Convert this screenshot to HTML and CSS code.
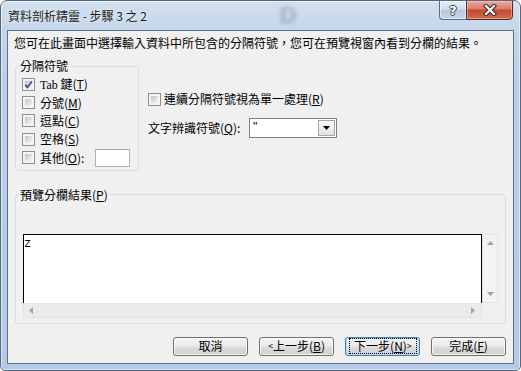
FILE: index.html
```html
<!DOCTYPE html>
<html lang="zh-Hant">
<head>
<meta charset="utf-8">
<title>資料剖析精靈</title>
<link rel="stylesheet" href="styles.css">
</head>
<body>
<div class="window">
  <div class="titlebar">
    <span class="title">資料剖析精靈 - 步驟 3 之 2</span>
    <span class="ghost">D</span>
    <div class="caption">
      <span class="cap-help">?</span>
      <span class="cap-close">
        <svg width="14" height="12" viewBox="0 0 14 12"><path d="M3 2 L11 10 M11 2 L3 10" stroke="#3a2320" stroke-width="4.2" stroke-linecap="square" fill="none"/><path d="M3 2 L11 10 M11 2 L3 10" stroke="#ffffff" stroke-width="2.2" stroke-linecap="square" fill="none"/></svg>
      </span>
    </div>
  </div>
  <div class="client">
    <p class="intro">您可在此畫面中選擇輸入資料中所包含的分隔符號，您可在預覽視窗內看到分欄的結果。</p>
    <div class="options">
      <fieldset class="group delims">
        <legend>分隔符號</legend>
        <div class="row"><span class="cb"><svg class="check" width="11" height="11" viewBox="0 0 11 11"><path d="M2.2 5.6 L4.4 8.4 L9 2.2" stroke="#4b5f8e" stroke-width="1.9" fill="none"/></svg></span><span class="lbl"><span class="latin">Tab</span> 鍵(<u>T</u>)</span></div>
        <div class="row"><span class="cb"></span><span class="lbl">分號(<u>M</u>)</span></div>
        <div class="row"><span class="cb"></span><span class="lbl">逗點(<u>C</u>)</span></div>
        <div class="row"><span class="cb"></span><span class="lbl">空格(<u>S</u>)</span></div>
        <div class="row"><span class="cb"></span><span class="lbl">其他(<u>O</u>):</span><span class="textbox"></span></div>
      </fieldset>
      <div class="side">
        <div class="row"><span class="cb"></span><span class="lbl tight">連續分隔符號視為單一處理(<u>R</u>)</span></div>
        <div class="qual">
          <span class="lbl-q">文字辨識符號(<u>Q</u>):</span>
          <div class="combo">
            <span class="combo-val">"</span>
            <span class="combo-btn"><svg width="7" height="4" viewBox="0 0 7 4"><path d="M0 0 H7 L3.5 4 Z" fill="#000"/></svg></span>
          </div>
        </div>
      </div>
    </div>
    <fieldset class="group preview">
      <legend>預覽分欄結果(<u>P</u>)</legend>
      <div class="pv">
        <div class="pv-data">z</div>
        <div class="vscroll">
          <svg width="7" height="4" viewBox="0 0 7 4"><path d="M0 4 H7 L3.5 0 Z" fill="#a3a3a3"/></svg>
          <svg width="7" height="4" viewBox="0 0 7 4"><path d="M0 0 H7 L3.5 4 Z" fill="#a3a3a3"/></svg>
        </div>
        <div class="hscroll">
          <svg width="4" height="7" viewBox="0 0 4 7"><path d="M4 0 V7 L0 3.5 Z" fill="#a3a3a3"/></svg>
          <svg width="4" height="7" viewBox="0 0 4 7"><path d="M0 0 V7 L4 3.5 Z" fill="#a3a3a3"/></svg>
        </div>
        <div class="corner"></div>
      </div>
    </fieldset>
    <div class="buttons">
      <button class="btn">取消</button>
      <button class="btn"><span class="lt">&lt;</span> 上一步(<u>B</u>)</button>
      <button class="btn default"><span class="focus">下一步(<u>N</u>) <span class="lt">&gt;</span></span></button>
      <button class="btn">完成(<u>F</u>)</button>
    </div>
  </div>
</div>
</body>
</html>
```

FILE: styles.css
```css
* { box-sizing: border-box; }
html, body { margin: 0; padding: 0; background: #ffffff; }
body {
  font-family: "Noto Sans CJK TC", "Noto Sans", sans-serif;
  font-size: 12px;
  color: #000;
}

.window {
  width: 521px;
  height: 371px;
  border: 1px solid #56687f;
  border-radius: 7px 7px 5px 5px;
  background: linear-gradient(to bottom, #d2e0f0 0px, #c4d6eb 29px, #bad0e9 80px, #b2cae7 100%);
  box-shadow: inset 0 0 0 1px rgba(255, 255, 255, 0.55);
  padding: 0 6px 6px 6px;
  display: flex;
  flex-direction: column;
  overflow: hidden;
}

.titlebar {
  height: 29px;
  display: flex;
  align-items: center;
}
.title {
  padding-left: 1px;
  line-height: 14px;
  color: #1b1b1b;
  white-space: nowrap;
  text-shadow: 0 0 5px rgba(255, 255, 255, 0.9);
}
.ghost {
  margin-left: 132px;
  font: bold 22px/22px "DejaVu Sans", sans-serif;
  color: rgba(70, 82, 100, 0.28);
  filter: blur(2px);
}
.caption {
  margin-left: auto;
  margin-right: 1px;
  margin-top: -1px;
  align-self: flex-start;
  height: 20px;
  display: flex;
}
.cap-help {
  width: 27px;
  border: 1px solid #5a6c83;
  border-right: none;
  border-radius: 0 0 0 4px;
  background: linear-gradient(to bottom, #e6edf6 0%, #d3deeb 45%, #b7c8dc 52%, #c8d7e8 100%);
  box-shadow: inset 0 0 0 1px rgba(255, 255, 255, 0.5);
  display: flex;
  align-items: center;
  justify-content: center;
  font: bold 13px/13px "DejaVu Sans", sans-serif;
  color: #ffffff;
  text-shadow: 1px 0 0 #3b4656, -1px 0 0 #3b4656, 0 1px 0 #3b4656, 0 -1px 0 #3b4656;
}
.cap-close {
  width: 47px;
  border: 1px solid #4f2b29;
  border-radius: 0 0 4px 0;
  background: linear-gradient(to bottom, #e9ab9c 0%, #db7d69 42%, #c44a31 52%, #d2694d 100%);
  box-shadow: inset 0 0 0 1px rgba(255, 220, 210, 0.45);
  display: flex;
  align-items: center;
  justify-content: center;
}

.client {
  flex: 1;
  border: 1px solid #5f7189;
  background: #f0f0f0;
  display: flex;
  flex-direction: column;
}

.intro {
  margin: 5px 0 0 6px;
  line-height: 14px;
  white-space: nowrap;
}

.options {
  display: flex;
  margin: 9px 0 0 7px;
}

.group {
  margin: 0;
  border: 1px solid #d5dfe5;
  border-radius: 3px;
  min-width: 0;
}
.group legend {
  padding: 0 1px;
  line-height: 14px;
}

.delims {
  width: 124px;
  padding: 2px 0 3px 6px;
}
.delims legend { margin-left: -3px; }

.row {
  display: flex;
  align-items: center;
  height: 18.4px;
}
.cb {
  flex: none;
  width: 13px;
  height: 13px;
  border: 1px solid #8e8f8f;
  padding: 2px;
  background: linear-gradient(135deg, #c0c5cb 0%, #f6f6f6 100%) content-box, #f4f4f4;
  display: flex;
}
.check {
  flex: none;
  margin: -2px;
}
.lbl {
  margin-left: 5px;
  line-height: 14px;
  white-space: nowrap;
}
.lbl.tight { margin-left: 3px; }
.latin { font-family: "Liberation Serif", serif; }
u { text-underline-offset: 1px; }

.textbox {
  width: 35px;
  height: 18px;
  margin-left: 11px;
  border: 1px solid #b4b4b4;
  border-top-color: #a6a6a6;
  background: #ffffff;
}

.side {
  margin-left: 9px;
  padding-top: 33px;
  display: flex;
  flex-direction: column;
}
.side .row { height: 14px; }

.qual {
  display: flex;
  align-items: center;
  margin-top: 12px;
}
.lbl-q {
  width: 101px;
  line-height: 14px;
  white-space: nowrap;
}
.combo {
  width: 88px;
  height: 20px;
  border: 1px solid #828282;
  background: #ffffff;
  display: flex;
}
.combo-val {
  flex: 1;
  padding-left: 3px;
  font: 12px/16px "Liberation Sans", sans-serif;
}
.combo-btn {
  width: 17px;
  margin: 1px;
  border: 1px solid #a8a8a8;
  background: linear-gradient(to bottom, #fcfcfc, #e3e3e3);
  display: flex;
  align-items: center;
  justify-content: center;
}

.preview {
  width: 491px;
  margin: 17px 0 0 7px;
  padding: 32px 7px 5px 7px;
}
.preview legend { margin-left: -4px; }

.pv {
  display: grid;
  grid-template-columns: 459px 16px;
  grid-template-rows: 69px 15px;
}
.pv-data {
  background: #ffffff;
  border: 1px solid #000;
  border-bottom: none;
  padding: 3px 0 0 0;
  font: 12px/12px "Liberation Mono", monospace;
}
.vscroll {
  background: #f3f3f3;
  border: 1px solid #e5e5e5;
  display: flex;
  flex-direction: column;
  align-items: center;
  justify-content: space-between;
  padding: 6px 0 6px 0;
}
.hscroll {
  background: #ebebeb;
  border: 1px solid #e2e2e2;
  border-top-color: #e6e6e6;
  display: flex;
  align-items: center;
  justify-content: space-between;
  padding: 0 6px 0 5px;
}
.corner { background: transparent; }

.buttons {
  display: flex;
  justify-content: flex-end;
  gap: 11px;
  margin-top: 13px;
  padding-right: 7px;
}
.btn {
  width: 75px;
  height: 19px;
  padding: 0;
  border: 1px solid #707070;
  border-radius: 3px;
  background: linear-gradient(to bottom, #f3f3f3 0%, #ebebeb 48%, #dddddd 52%, #cfcfcf 100%);
  box-shadow: inset 0 0 0 1px rgba(255, 255, 255, 0.75);
  font: 12px/14px "Noto Sans CJK TC", "Noto Sans", sans-serif;
  color: #000;
  display: flex;
  align-items: center;
  justify-content: center;
  white-space: nowrap;
}
.lt { font-size: 9px; }
.btn.default {
  border-color: #3c7fb1;
  box-shadow: inset 0 0 0 1px #b3dcf5;
  align-items: stretch;
}
.focus {
  flex: 1;
  margin: 0 2px 1px 3px;
  border: 1px dotted #000;
  display: flex;
  align-items: center;
  justify-content: center;
}
```
